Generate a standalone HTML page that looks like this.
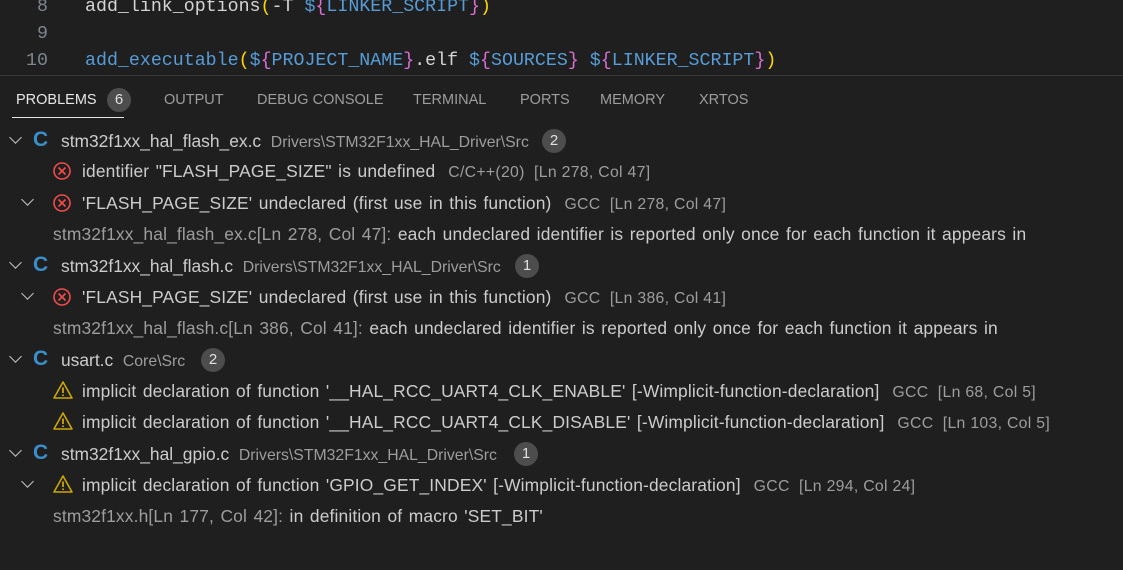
<!DOCTYPE html>
<html><head><meta charset="utf-8"><style>
*{margin:0;padding:0;box-sizing:border-box}
body{width:1123px;height:570px;background:#1f1f1f;overflow:hidden;position:relative;font-family:"Liberation Sans",sans-serif;color:#cccccc}
.code{position:absolute;font-family:"Liberation Mono",monospace;font-size:18.3px;white-space:pre;color:#d4d4d4}
.ln{position:absolute;font-family:"Liberation Mono",monospace;font-size:18.3px;color:#7d8590;text-align:right;width:48px;left:0}
.b{color:#569cd6}.m{color:#da70d6}.y{color:#ffd700}
.sep{position:absolute;left:0;right:0;top:75px;height:1px;background:#3c3c3c}
.tab{position:absolute;top:92px;font-size:14.5px;color:#9d9d9d}
.row{position:absolute;white-space:nowrap;font-size:17.4px;color:#cccccc;height:24px;line-height:24px;word-spacing:1.5px;letter-spacing:0.15px}
.d{color:#9d9d9d;font-size:15.8px;word-spacing:0;letter-spacing:0.3px}
.g{color:#9d9d9d}
.f{letter-spacing:0;word-spacing:0}
.f .d{letter-spacing:0}
.chev{position:absolute;width:9px;height:9px;border-right:1.6px solid #c5c5c5;border-bottom:1.6px solid #c5c5c5;transform:rotate(45deg)}
.C{position:absolute;font-weight:bold;color:#3a8ec9;font-size:21px;font-family:"Liberation Sans",sans-serif}
.cnt{position:absolute;width:24px;height:24px;border-radius:12px;background:#4d4d4d;color:#e0e0e0;font-size:15px;text-align:center;line-height:24px;letter-spacing:0;word-spacing:0}
svg{position:absolute}
</style></head><body>
<div class="ln" style="top:-3px;">8</div>
<div class="ln" style="top:24px;">9</div>
<div class="ln" style="top:51px;">10</div>
<div class="code" style="left:85px;top:-3px;">add_link_options<span class="y">(</span>-T <span class="b">$</span><span class="m">{</span><span class="b">LINKER_SCRIPT</span><span class="m">}</span><span class="y">)</span></div>
<div class="code" style="left:85px;top:51px;"><span class="b">add_executable</span><span class="y">(</span><span class="b">$</span><span class="m">{</span><span class="b">PROJECT_NAME</span><span class="m">}</span>.elf <span class="b">$</span><span class="m">{</span><span class="b">SOURCES</span><span class="m">}</span> <span class="b">$</span><span class="m">{</span><span class="b">LINKER_SCRIPT</span><span class="m">}</span><span class="y">)</span></div>
<div class="sep"></div>
<div class="tab" style="left:16px;color:#e7e7e7">PROBLEMS</div>
<div class="cnt" style="left:107px;top:88px">6</div>
<div style="position:absolute;left:12px;top:117px;width:112px;height:1px;background:#e7e7e7"></div>
<div class="tab" style="left:164px">OUTPUT</div>
<div class="tab" style="left:257px">DEBUG CONSOLE</div>
<div class="tab" style="left:413px">TERMINAL</div>
<div class="tab" style="left:520px">PORTS</div>
<div class="tab" style="left:600px">MEMORY</div>
<div class="tab" style="left:699px">XRTOS</div>

<div class="chev" style="left:11px;top:133px"></div>
<div class="C" style="left:33px;top:128px">C</div>
<div class="row f" style="left:61px;top:129px">stm32f1xx_hal_flash_ex.c&nbsp; <span class="d">Drivers\STM32F1xx_HAL_Driver\Src</span></div>
<div class="cnt" style="left:542px;top:129px">2</div>

<svg style="left:52px;top:161px" width="20" height="20" viewBox="0 0 20 20"><circle cx="10" cy="10" r="8" fill="none" stroke="#f14c4c" stroke-width="1.6"/><path d="M6.5 6.5L13.5 13.5M13.5 6.5L6.5 13.5" stroke="#f14c4c" stroke-width="1.6"/></svg>
<div class="row" style="left:82px;top:159px">identifier "FLASH_PAGE_SIZE" is undefined&nbsp; <span class="d">C/C++(20)&nbsp; [Ln 278, Col 47]</span></div>

<div class="chev" style="left:23px;top:195px"></div>
<svg style="left:52px;top:193px" width="20" height="20" viewBox="0 0 20 20"><circle cx="10" cy="10" r="8" fill="none" stroke="#f14c4c" stroke-width="1.6"/><path d="M6.5 6.5L13.5 13.5M13.5 6.5L6.5 13.5" stroke="#f14c4c" stroke-width="1.6"/></svg>
<div class="row" style="left:82px;top:191px">'FLASH_PAGE_SIZE' undeclared (first use in this function)&nbsp; <span class="d">GCC&nbsp; [Ln 278, Col 47]</span></div>
<div class="row" style="left:53px;top:222px"><span class="g">stm32f1xx_hal_flash_ex.c[Ln 278, Col 47]:</span> each undeclared identifier is reported only once for each function it appears in</div>

<div class="chev" style="left:11px;top:258px"></div>
<div class="C" style="left:33px;top:253px">C</div>
<div class="row f" style="left:61px;top:254px">stm32f1xx_hal_flash.c&nbsp; <span class="d">Drivers\STM32F1xx_HAL_Driver\Src</span></div>
<div class="cnt" style="left:515px;top:254px">1</div>
<div class="chev" style="left:23px;top:289px"></div>
<svg style="left:52px;top:287px" width="20" height="20" viewBox="0 0 20 20"><circle cx="10" cy="10" r="8" fill="none" stroke="#f14c4c" stroke-width="1.6"/><path d="M6.5 6.5L13.5 13.5M13.5 6.5L6.5 13.5" stroke="#f14c4c" stroke-width="1.6"/></svg>
<div class="row" style="left:82px;top:285px">'FLASH_PAGE_SIZE' undeclared (first use in this function)&nbsp; <span class="d">GCC&nbsp; [Ln 386, Col 41]</span></div>
<div class="row" style="left:53px;top:316px"><span class="g">stm32f1xx_hal_flash.c[Ln 386, Col 41]:</span> each undeclared identifier is reported only once for each function it appears in</div>

<div class="chev" style="left:11px;top:352px"></div>
<div class="C" style="left:33px;top:347px">C</div>
<div class="row f" style="left:61px;top:348px">usart.c&nbsp; <span class="d">Core\Src</span></div>
<div class="cnt" style="left:201px;top:348px">2</div>
<svg style="left:52px;top:380px" width="22" height="20" viewBox="0 0 22 20"><path d="M11 2L20 18H2Z" fill="none" stroke="#cca700" stroke-width="1.6" stroke-linejoin="round"/><path d="M11 7.5V13M11 14.5V16" stroke="#cca700" stroke-width="1.8"/></svg>
<div class="row" style="left:82px;top:379px">implicit declaration of function '__HAL_RCC_UART4_CLK_ENABLE' [-Wimplicit-function-declaration]&nbsp; <span class="d">GCC&nbsp; [Ln 68, Col 5]</span></div>
<svg style="left:52px;top:411px" width="22" height="20" viewBox="0 0 22 20"><path d="M11 2L20 18H2Z" fill="none" stroke="#cca700" stroke-width="1.6" stroke-linejoin="round"/><path d="M11 7.5V13M11 14.5V16" stroke="#cca700" stroke-width="1.8"/></svg>
<div class="row" style="left:82px;top:410px">implicit declaration of function '__HAL_RCC_UART4_CLK_DISABLE' [-Wimplicit-function-declaration]&nbsp; <span class="d">GCC&nbsp; [Ln 103, Col 5]</span></div>

<div class="chev" style="left:11px;top:446px"></div>
<div class="C" style="left:33px;top:441px">C</div>
<div class="row f" style="left:61px;top:442px">stm32f1xx_hal_gpio.c&nbsp; <span class="d">Drivers\STM32F1xx_HAL_Driver\Src</span></div>
<div class="cnt" style="left:514px;top:442px">1</div>
<div class="chev" style="left:23px;top:477px"></div>
<svg style="left:52px;top:474px" width="22" height="20" viewBox="0 0 22 20"><path d="M11 2L20 18H2Z" fill="none" stroke="#cca700" stroke-width="1.6" stroke-linejoin="round"/><path d="M11 7.5V13M11 14.5V16" stroke="#cca700" stroke-width="1.8"/></svg>
<div class="row" style="left:82px;top:473px">implicit declaration of function 'GPIO_GET_INDEX' [-Wimplicit-function-declaration]&nbsp; <span class="d">GCC&nbsp; [Ln 294, Col 24]</span></div>
<div class="row" style="left:53px;top:504px"><span class="g">stm32f1xx.h[Ln 177, Col 42]:</span> in definition of macro 'SET_BIT'</div>
</body></html>
